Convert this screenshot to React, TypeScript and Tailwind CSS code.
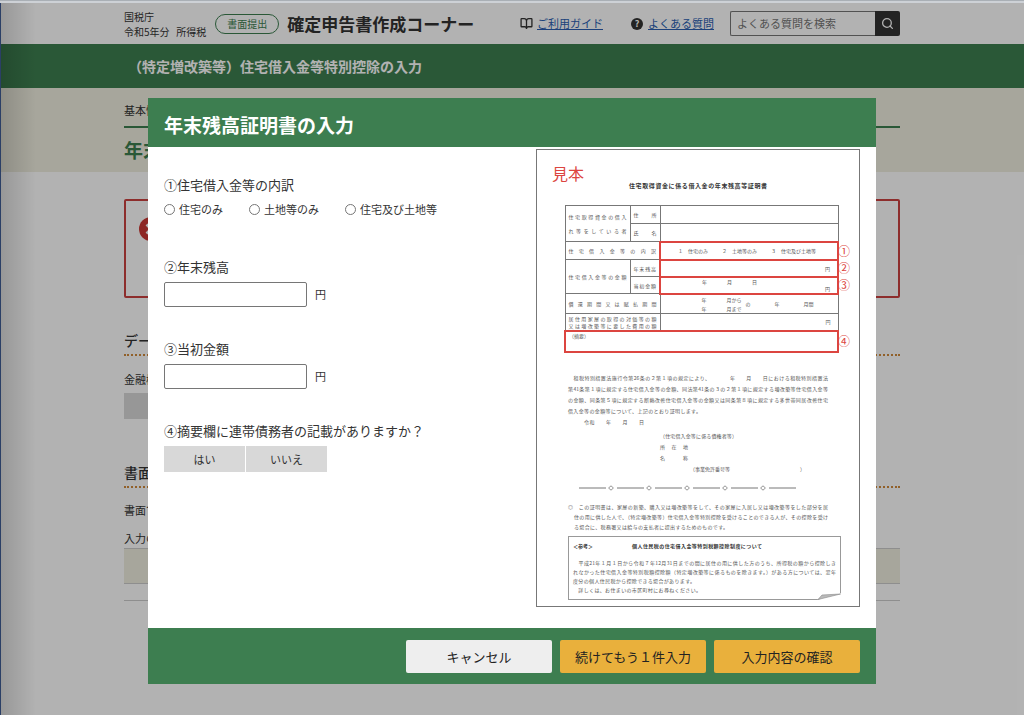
import React from "react";
import { BookOpen, Search } from "lucide-react";

const DialogHeader: React.FC<{ title: string }> = ({ title }) => (
  <div className="bg-[#3d7e50] px-4 pt-[14px] pb-[10px]">
    <h2 id="dialog-title" className="text-[19px] leading-[25px] font-bold text-white">
      {title}
    </h2>
  </div>
);

interface AmountFieldProps {
  id: string;
  label: string;
}

const AmountField: React.FC<AmountFieldProps> = ({ id, label }) => (
  <div>
    <label htmlFor={id} className="block text-[13px] leading-5">
      {label}
    </label>
    <div className="mt-[5px] flex items-center gap-2">
      <input
        id={id}
        type="text"
        className="h-[25px] w-[143px] rounded-[2px] border border-[#767676] bg-white px-2 text-[11px]"
      />
      <span className="text-[11px]">円</span>
    </div>
  </div>
);

/* Text spread over the full width of its box, as on printed forms */
const Spread: React.FC<{ children: React.ReactNode; className?: string }> = ({
  children,
  className = "",
}) => (
  <span className={`block whitespace-nowrap [text-align-last:justify] ${className}`}>
    {children}
  </span>
);

const Marker: React.FC<{ children: string }> = ({ children }) => (
  <span className="absolute top-1/2 left-full ml-px -translate-y-1/2 text-[12px] leading-none text-[#dc4540]">
    {children}
  </span>
);

const cell = "border border-[#777] px-[3px] py-0";
const redCell = "relative border-2 border-[#dc4540] px-[3px] py-0";

const SampleTable = () => (
  <table className="w-full table-fixed border-collapse border border-[#555] leading-[7px]">
    <colgroup>
      <col className="w-[65px]" />
      <col className="w-[30px]" />
      <col />
    </colgroup>
    <tbody>
      <tr className="h-[18px]">
        <td rowSpan={2} className={cell}>
          <Spread className="leading-[14px]">住宅取得資金の借入</Spread>
          <Spread className="leading-[14px]">れ等をしている者</Spread>
        </td>
        <td className={cell}>
          <Spread>住所</Spread>
        </td>
        <td className={cell} />
      </tr>
      <tr className="h-[18px]">
        <td className={cell}>
          <Spread>氏名</Spread>
        </td>
        <td className={cell} />
      </tr>
      <tr className="h-[18px]">
        <td colSpan={2} className={cell}>
          <Spread>住宅借入金等の内訳</Spread>
        </td>
        <td className={redCell}>
          <div className="flex justify-between pr-[18px] pl-[14px]">
            <span>１　住宅のみ</span>
            <span>２　土地等のみ</span>
            <span>３　住宅及び土地等</span>
          </div>
          <Marker>①</Marker>
        </td>
      </tr>
      <tr className="h-[17px]">
        <td rowSpan={2} className={cell}>
          <Spread>住宅借入金等の金額</Spread>
        </td>
        <td className={cell}>
          <Spread>年末残高</Spread>
        </td>
        <td className={redCell}>
          <div className="pr-1 text-right">円</div>
          <Marker>②</Marker>
        </td>
      </tr>
      <tr className="h-[17px]">
        <td className={cell}>
          <Spread>当初金額</Spread>
        </td>
        <td className={redCell}>
          <div className="flex gap-5 pl-[38px]">
            <span>年</span>
            <span>月</span>
            <span>日</span>
          </div>
          <div className="pr-1 text-right">円</div>
          <Marker>③</Marker>
        </td>
      </tr>
      <tr className="h-[20px]">
        <td colSpan={2} className={cell}>
          <Spread>償還期間又は賦払期間</Spread>
        </td>
        <td className={cell}>
          <div className="flex items-center pl-[38px]">
            <div className="w-11 leading-[9px]">
              <div className="flex gap-5">
                <span>年</span>
                <span className="whitespace-nowrap">月から</span>
              </div>
              <div className="flex gap-5">
                <span>年</span>
                <span className="whitespace-nowrap">月まで</span>
              </div>
            </div>
            <span>の</span>
            <span className="ml-6">年</span>
            <span className="ml-6">月間</span>
          </div>
        </td>
      </tr>
      <tr className="h-[17px]">
        <td colSpan={2} className={cell}>
          <Spread>居住用家屋の取得の対価等の額</Spread>
          <Spread>又は増改築等に要した費用の額</Spread>
        </td>
        <td className={cell}>
          <div className="pr-1 text-right">円</div>
        </td>
      </tr>
      <tr className="h-[21px]">
        <td colSpan={3} className={`${redCell} align-top`}>
          （摘要）
          <Marker>④</Marker>
        </td>
      </tr>
    </tbody>
  </table>
);

const SampleCertificate = () => (
  <div className="flex h-[458px] w-[324px] shrink-0 flex-col border border-[#777] bg-white pr-5 pl-[27px] text-[5px] leading-[11px] text-[#555]">
    <div className="-ml-3 pt-[11px] text-[16px] leading-6 text-[#dc4540]">見本</div>
    <h3 className="ml-[65px] w-[138px] text-[6px] leading-[2px] font-bold text-[#333]">
      <Spread>住宅取得資金に係る借入金の年末残高等証明書</Spread>
    </h3>

    <div className="mt-[18px]">
      <SampleTable />
    </div>

    <div className="mt-[19px] mr-[11px] ml-1">
      <Spread>　租税特別措置法施行令第26条の２第１項の規定により、　　　　年　　月　　日における租税特別措置法</Spread>
      <Spread>第41条第１項に規定する住宅借入金等の金額、同法第41条の３の２第１項に規定する増改築等住宅借入金等</Spread>
      <Spread>の金額、同条第５項に規定する断熱改修住宅借入金等の金額又は同条第８項に規定する多世帯同居改修住宅</Spread>
      <Spread className="w-[133px]">借入金等の金額等について、上記のとおり証明します。</Spread>
      <Spread className="ml-4 w-[60px]">令和　　年　　月　　日</Spread>
    </div>

    <div className="mt-[3px] ml-24">
      <Spread className="w-[77px]">（住宅借入金等に係る債権者等）</Spread>
      <Spread className="w-7">所在地</Spread>
      <Spread className="w-7">名称</Spread>
      <div className="ml-[30px] flex w-[115px] justify-between">
        <Spread className="w-10">（事業免許番号等</Spread>
        <span>）</span>
      </div>
    </div>

    <svg viewBox="0 0 218 6" className="mt-[11px] ml-[15px] h-[6px] w-[218px]" fill="none" stroke="#777">
      {[0, 38, 76, 114, 152, 190].map((x) => (
        <path key={x} d={`M${x} 3h27`} />
      ))}
      {[32, 70, 108, 146, 184].map((x) => (
        <path key={x} d={`M${x} .8l2.4 2.2l-2.4 2.2l-2.4-2.2z`} strokeWidth=".8" />
      ))}
    </svg>

    <div className="mt-[11px] mr-[11px] ml-1 leading-[10px]">
      <Spread>◎　この証明書は、家屋の新築、購入又は増改築等をして、その家屋に入居し又は増改築等をした部分を居</Spread>
      <Spread className="ml-[6px]">住の用に供した人で、（特定増改築等）住宅借入金等特別控除を受けることのできる人が、その控除を受け</Spread>
      <Spread className="ml-[6px] w-[154px]">る場合に、税務署又は給与の支払者に提出するためのものです。</Spread>
    </div>

    <div className="relative mt-1 -mr-[2px] ml-1 h-[64px] border border-[#999] px-1 pt-1 leading-[9px]">
      <div className="flex items-center font-bold text-[#333]">
        <span className="w-[59px]">＜参考＞</span>
        <Spread className="w-[130px]">個人住民税の住宅借入金等特別税額控除制度について</Spread>
      </div>
      <div className="mt-2">
        <Spread>　平成21年１月１日から令和７年12月31日までの間に居住の用に供した方のうち、所得税の額から控除しき</Spread>
        <Spread>れなかった住宅借入金等特別税額控除額（特定増改築等に係るものを除きます。）がある方については、翌年</Spread>
        <Spread className="w-[122px]">度分の個人住民税から控除できる場合があります。</Spread>
        <Spread className="w-[128px]">　詳しくは、お住まいの市区町村にお尋ねください。</Spread>
      </div>
      <svg viewBox="0 0 24 7" className="absolute -right-px -bottom-px h-[7px] w-6">
        <path d="M0 7L24 0V7z" fill="#fff" />
        <path d="M1 6.5L5 2L23.5 1z" fill="#bbb" stroke="#888" strokeWidth=".6" />
      </svg>
    </div>
  </div>
);

const InputDialog = () => (
  <div
    role="dialog"
    aria-labelledby="dialog-title"
    className="w-full max-w-[728px] bg-white text-[#333]"
  >
    <DialogHeader title="年末残高証明書の入力" />

    <div className="flex justify-between pr-4 pb-[21px] pl-4">
      <form className="flex flex-col gap-8 pt-7">
        <fieldset className="pb-2">
          <legend className="text-[13px] leading-5">①住宅借入金等の内訳</legend>
          <div className="mt-[6px] flex gap-[26px] text-[11px] leading-4">
            {["住宅のみ", "土地等のみ", "住宅及び土地等"].map((name) => (
              <label key={name} className="flex items-center gap-1">
                <input
                  type="radio"
                  name="breakdown"
                  className="size-[11px] appearance-none rounded-full border border-[#767676] bg-white checked:border-4"
                />
                {name}
              </label>
            ))}
          </div>
        </fieldset>

        <AmountField id="balance" label="②年末残高" />
        <AmountField id="initial" label="③当初金額" />

        <fieldset>
          <legend className="text-[13px] leading-5">
            ④摘要欄に連帯債務者の記載がありますか？
          </legend>
          <div className="mt-[5px] flex gap-px">
            <button type="button" className="h-[26px] w-[81px] bg-[#d8d8d8] text-[11px]">
              はい
            </button>
            <button type="button" className="h-[26px] w-[81px] bg-[#d8d8d8] text-[11px]">
              いいえ
            </button>
          </div>
        </fieldset>
      </form>

      <div className="pt-[2px]">
        <SampleCertificate />
      </div>
    </div>

    <div className="flex justify-end gap-2 bg-[#3d7e50] px-4 pt-3 pb-[11px] text-[13px] text-[#222]">
      <button type="button" className="h-[33px] w-[146px] rounded-[2px] bg-[#eee]">
        キャンセル
      </button>
      <button type="button" className="h-[33px] w-[146px] rounded-[2px] bg-[#e9b03c]">
        続けてもう１件入力
      </button>
      <button type="button" className="h-[33px] w-[146px] rounded-[2px] bg-[#e9b03c]">
        入力内容の確認
      </button>
    </div>
  </div>
);

const SiteHeader = () => (
  <header className="bg-white pt-[3px]">
    <div className="mx-auto flex h-[41px] max-w-[776px] items-center">
      <div className="text-[10px] leading-[15px]">
        <div>国税庁</div>
        <div>令和5年分&nbsp;&nbsp; 所得税</div>
      </div>
      <span className="ml-[9px] rounded-full border border-[#3d7e50] px-[11px] text-[10px] leading-[18px] text-[#3d7e50]">
        書面提出
      </span>
      <h1 className="ml-2 text-[17px] font-bold">確定申告書作成コーナー</h1>

      <nav className="ml-auto flex items-center text-[11px]">
        <BookOpen size={13} strokeWidth={2.4} />
        <a href="#guide" className="ml-1 text-[#2a5db0] underline">
          ご利用ガイド
        </a>
        <span className="ml-7 flex size-3 items-center justify-center rounded-full bg-[#333] text-[9px] font-bold text-white">
          ?
        </span>
        <a href="#faq" className="ml-[5px] text-[#2a5db0] underline">
          よくある質問
        </a>
      </nav>
      <form className="ml-4 flex h-[25px]">
        <input
          type="text"
          aria-label="よくある質問を検索"
          placeholder="よくある質問を検索"
          className="w-[145px] rounded-l-[2px] border border-r-0 border-[#767676] px-[6px] text-[11px] placeholder:text-[#757575]"
        />
        <button
          type="button"
          aria-label="検索"
          className="flex w-[25px] items-center justify-center rounded-r-[2px] bg-[#333] text-white"
        >
          <Search size={13} strokeWidth={2.4} />
        </button>
      </form>
    </div>
  </header>
);

const PageContent = () => (
  <>
    <div className="bg-[#3d7e50]">
      <div className="mx-auto flex h-11 max-w-[776px] items-center pl-1 text-[14px] font-bold text-white">
        （特定増改築等）住宅借入金等特別控除の入力
      </div>
    </div>

    <div className="bg-[#f0eee0]">
      <div className="mx-auto h-[84px] max-w-[776px] pt-[14px]">
        <p className="text-[11px] leading-4">基本情報</p>
        <h2 className="mt-2 border-t-2 border-[#3d7e50] pt-2 text-[19px] leading-7 font-bold text-[#3d7e50]">
          年末残高
        </h2>
      </div>
    </div>

    <main className="mx-auto max-w-[776px] pt-[27px]">
      <div className="h-[99px] rounded-[2px] border-2 border-[#cb4140] px-[13px] pt-4">
        <svg viewBox="0 0 24 24" className="size-6">
          <circle cx="12" cy="12" r="12" fill="#cb3935" />
          <path d="M7.5 7.5l9 9m0-9l-9 9" stroke="#fff" strokeWidth="2.6" />
        </svg>
      </div>

      <h3 className="mt-8 border-b-2 border-dotted border-[#d08a3c] pb-1 text-[14px] leading-5 font-medium">
        データ
      </h3>
      <p className="mt-[15px] text-[11px] leading-4">金融機関</p>
      <div className="mt-[6px] h-[26px] w-[81px] bg-[#d8d8d8]" />

      <h3 className="mt-[43px] border-b-2 border-dotted border-[#d08a3c] pb-1 text-[14px] leading-5 font-medium">
        書面で
      </h3>
      <p className="mt-[14px] text-[11px] leading-4">書面で</p>
      <p className="mt-3 text-[11px] leading-4">入力の</p>
      <div className="mt-[2px] h-9 border-y border-[#ccc] bg-[#f0eee0]" />
      <hr className="mt-4 border-[#ccc]" />
    </main>
  </>
);

export default function App() {
  return (
    <div className="relative min-h-screen overflow-hidden bg-white font-['Noto_Sans_CJK_JP',sans-serif] text-[#333]">
      <SiteHeader />
      <PageContent />

      {/* BACKDROP */}
      <div className="absolute inset-0 flex items-start justify-center bg-black/30 pt-[98px]">
        <div className="absolute inset-y-0 left-0 w-9 border-l border-[#2b3f66] bg-linear-to-r from-black/15 to-transparent" />
        <div className="absolute inset-x-0 top-0 h-[3px] border-t border-[#a9afb5] bg-[#cdd1d6]" />
        <InputDialog />
      </div>
    </div>
  );
}
